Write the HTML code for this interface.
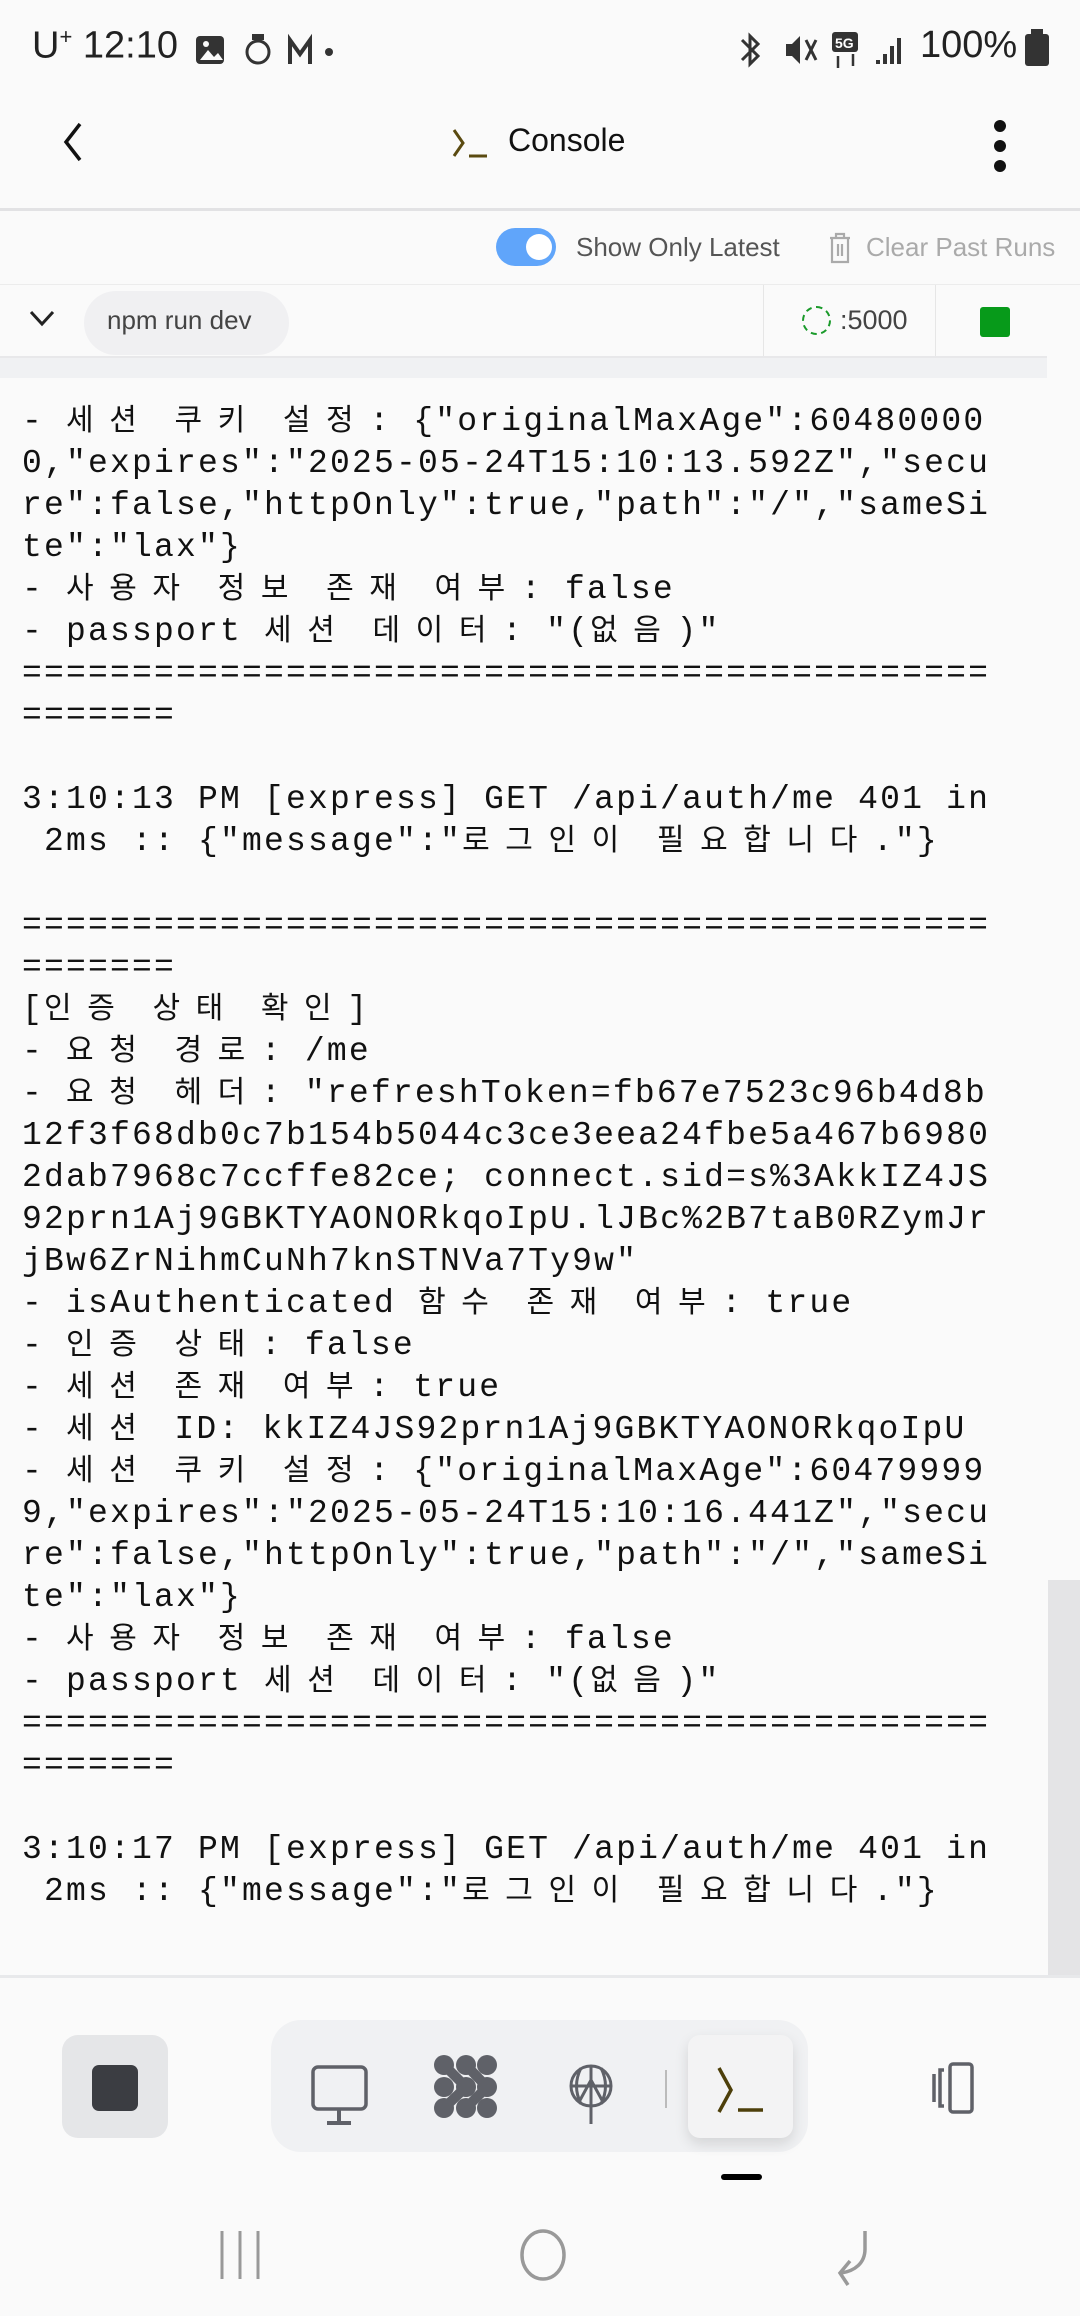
<!DOCTYPE html>
<html><head><meta charset="utf-8">
<style>
*{margin:0;padding:0;box-sizing:border-box}
body{width:1080px;height:2316px;background:#fafafa;position:relative;overflow:hidden;font-family:"Liberation Sans","Noto Sans CJK KR",sans-serif;color:#111}
.abs{position:absolute}
.log{position:absolute;left:22px;top:401px;font-family:"Liberation Mono","Noto Sans CJK KR",monospace;font-size:33px;letter-spacing:2.2px;line-height:42px;white-space:pre;color:#111}
.k{font-family:"Noto Sans CJK KR",sans-serif;font-size:30px;letter-spacing:15.6px;line-height:1}
</style></head><body>
<!-- status bar -->
<div class="abs" style="left:32px;top:24px;font-size:38px;color:#222">U<sup style="font-size:22px">+</sup> 12:10</div>
<svg class="abs" style="left:194px;top:32px" width="140" height="40" viewBox="0 0 140 40">
<rect x="2" y="4" width="28" height="28" rx="4" fill="#333"/><path d="M6 28l8-10 6 7 4-4 5 7z" fill="#fafafa"/><circle cx="12" cy="12" r="3" fill="#fafafa"/>
<circle cx="64" cy="20" r="11" fill="none" stroke="#333" stroke-width="3"/><rect x="58" y="2" width="12" height="6" fill="#333"/>
<path d="M96 32V8l10 14 10-14v24" fill="none" stroke="#333" stroke-width="4"/>
<circle cx="135" cy="20" r="4" fill="#333"/></svg>
<svg class="abs" style="left:738px;top:28px" width="290" height="44" viewBox="0 0 290 44">
<path d="M4 12l16 16-8 8V8l8 8-16 16" fill="none" stroke="#333" stroke-width="3"/>
<path d="M48 16h6l8-8v28l-8-8h-6z" fill="#333"/><path d="M68 12l10 20M78 12l-10 20" stroke="#333" stroke-width="3"/>
<rect x="94" y="4" width="26" height="20" rx="3" fill="#333"/><text x="97" y="20" font-size="14" fill="#fff" font-family="Liberation Sans" font-weight="bold">5G</text>
<path d="M100 28v12M115 26v12" stroke="#333" stroke-width="2.5"/>
<path d="M140 36v-4M147 36v-10M154 36v-18M161 36v-26" stroke="#333" stroke-width="4"/>
</svg>
<div class="abs" style="left:920px;top:24px;font-size:38px;color:#222">100%</div>
<div class="abs" style="left:1025px;top:34px;width:24px;height:32px;background:#333;border-radius:3px"></div>
<div class="abs" style="left:1031px;top:29px;width:12px;height:6px;background:#333"></div>

<!-- header -->
<svg class="abs" style="left:58px;top:120px" width="30" height="44"><path d="M22 4L8 22l14 18" fill="none" stroke="#111" stroke-width="3.5"/></svg>
<svg class="abs" style="left:452px;top:126px" width="38" height="34"><path d="M2 4l9 13-9 13" fill="none" stroke="#5a4a10" stroke-width="3"/><path d="M17 30h18" stroke="#5a4a10" stroke-width="3"/></svg>
<div class="abs" style="left:508px;top:122px;font-size:32px;color:#111">Console</div>
<div class="abs" style="left:994px;top:120px;width:12px;height:12px;border-radius:6px;background:#111"></div>
<div class="abs" style="left:994px;top:140px;width:12px;height:12px;border-radius:6px;background:#111"></div>
<div class="abs" style="left:994px;top:160px;width:12px;height:12px;border-radius:6px;background:#111"></div>
<div class="abs" style="left:0;top:208px;width:1080px;height:3px;background:#e2e2e4"></div>

<!-- toolbar -->
<div class="abs" style="left:496px;top:228px;width:60px;height:38px;border-radius:19px;background:#60a5fa"></div>
<div class="abs" style="left:526px;top:234px;width:26px;height:26px;border-radius:13px;background:#fff"></div>
<div class="abs" style="left:576px;top:232px;font-size:26px;color:#555">Show Only Latest</div>
<svg class="abs" style="left:826px;top:230px" width="28" height="36"><path d="M4 8h20M10 8V4h8v4M6 8v24h16V8M12 14v12M16 14v12" fill="none" stroke="#aaa" stroke-width="2.2"/></svg>
<div class="abs" style="left:866px;top:232px;font-size:26px;color:#aaa">Clear Past Runs</div>
<div class="abs" style="left:0;top:284px;width:1080px;height:1px;background:#ececec"></div>

<!-- process row -->
<svg class="abs" style="left:28px;top:308px" width="28" height="20"><path d="M3 4l11 12L25 4" fill="none" stroke="#222" stroke-width="3"/></svg>
<div class="abs" style="left:84px;top:291px;width:205px;height:64px;border-radius:32px;background:#f0f0f2"></div>
<div class="abs" style="left:107px;top:305px;font-size:26px;color:#444">npm run dev</div>
<div class="abs" style="left:763px;top:285px;width:1px;height:72px;background:#e6e6e6"></div>
<div class="abs" style="left:935px;top:285px;width:1px;height:72px;background:#e6e6e6"></div>
<div class="abs" style="left:802px;top:306px;width:29px;height:29px;border-radius:50%;border:2px dashed #1a9a2a"></div>
<div class="abs" style="left:840px;top:305px;font-size:27px;color:#444">:5000</div>
<div class="abs" style="left:980px;top:307px;width:30px;height:30px;border-radius:3px;background:#079a1a"></div>
<div class="abs" style="left:0;top:356px;width:1047px;height:22px;background:#f0f1f3;border-top:2px solid #e8e8ea"></div>
<div class="abs" style="left:1048px;top:1580px;width:32px;height:396px;background:#e4e4e6"></div>

<div class="log">- <span class="k">세션</span> <span class="k">쿠키</span> <span class="k">설정</span>: {"originalMaxAge":60480000
0,"expires":"2025-05-24T15:10:13.592Z","secu
re":false,"httpOnly":true,"path":"/","sameSi
te":"lax"}
- <span class="k">사용자</span> <span class="k">정보</span> <span class="k">존재</span> <span class="k">여부</span>: false
- passport <span class="k">세션</span> <span class="k">데이터</span>: "(<span class="k">없음</span>)"
============================================
=======

3:10:13 PM [express] GET /api/auth/me 401 in
 2ms :: {"message":"<span class="k">로그인이</span> <span class="k">필요합니다</span>."}

============================================
=======
[<span class="k">인증</span> <span class="k">상태</span> <span class="k">확인</span>]
- <span class="k">요청</span> <span class="k">경로</span>: /me
- <span class="k">요청</span> <span class="k">헤더</span>: "refreshToken=fb67e7523c96b4d8b
12f3f68db0c7b154b5044c3ce3eea24fbe5a467b6980
2dab7968c7ccffe82ce; connect.sid=s%3AkkIZ4JS
92prn1Aj9GBKTYAONORkqoIpU.lJBc%2B7taB0RZymJr
jBw6ZrNihmCuNh7knSTNVa7Ty9w"
- isAuthenticated <span class="k">함수</span> <span class="k">존재</span> <span class="k">여부</span>: true
- <span class="k">인증</span> <span class="k">상태</span>: false
- <span class="k">세션</span> <span class="k">존재</span> <span class="k">여부</span>: true
- <span class="k">세션</span> ID: kkIZ4JS92prn1Aj9GBKTYAONORkqoIpU
- <span class="k">세션</span> <span class="k">쿠키</span> <span class="k">설정</span>: {"originalMaxAge":60479999
9,"expires":"2025-05-24T15:10:16.441Z","secu
re":false,"httpOnly":true,"path":"/","sameSi
te":"lax"}
- <span class="k">사용자</span> <span class="k">정보</span> <span class="k">존재</span> <span class="k">여부</span>: false
- passport <span class="k">세션</span> <span class="k">데이터</span>: "(<span class="k">없음</span>)"
============================================
=======

3:10:17 PM [express] GET /api/auth/me 401 in
 2ms :: {"message":"<span class="k">로그인이</span> <span class="k">필요합니다</span>."}</div>

<div class="abs" style="left:0;top:1975px;width:1080px;height:3px;background:#e8e9eb"></div>

<!-- bottom bar -->
<div class="abs" style="left:62px;top:2035px;width:106px;height:103px;border-radius:16px;background:#e5e6e8"></div>
<div class="abs" style="left:92px;top:2065px;width:46px;height:46px;border-radius:7px;background:#3b3d42"></div>
<div class="abs" style="left:271px;top:2020px;width:537px;height:132px;border-radius:30px;background:#f0f1f3"></div>
<div class="abs" style="left:688px;top:2035px;width:105px;height:103px;border-radius:12px;background:#f3f3f4;box-shadow:0 6px 14px rgba(0,0,0,.12)"></div>
<svg class="abs" style="left:300px;top:2050px" width="480" height="80" viewBox="300 2050 480 80">
<rect x="313" y="2067" width="53" height="42" rx="5" fill="none" stroke="#5f6168" stroke-width="3.5"/>
<path d="M339 2109v14M327 2123h24" stroke="#5f6168" stroke-width="4"/>
<g fill="#5f6168"><circle cx="444" cy="2065" r="10"/><circle cx="466" cy="2065" r="10"/><circle cx="487" cy="2065" r="10"/>
<circle cx="444" cy="2087" r="10"/><circle cx="466" cy="2087" r="10"/><circle cx="487" cy="2087" r="10"/>
<circle cx="444" cy="2108" r="10"/><circle cx="466" cy="2108" r="10"/><circle cx="487" cy="2108" r="10"/></g>
<path d="M444 2065l22 22-22 21M466 2065l21 22-21 21" stroke="#5f6168" stroke-width="10" fill="none"/>
<circle cx="591" cy="2086" r="20" fill="none" stroke="#5f6168" stroke-width="3"/>
<path d="M571 2086h40M591 2066v58M581 2068c-6 12-6 24 0 36M601 2068c6 12 6 24 0 36M579 2102l12-22 12 22" fill="none" stroke="#5f6168" stroke-width="3"/>
<path d="M666 2070v38" stroke="#bbb" stroke-width="2"/>
<path d="M719 2068l12 22-12 22M738 2110h25" fill="none" stroke="#4d3f0a" stroke-width="3.5"/>
</svg>
<svg class="abs" style="left:930px;top:2060px" width="70" height="60"><path d="M4 14v28M14 10h-4v36h4" fill="none" stroke="#5f6168" stroke-width="3.5"/><rect x="20" y="4" width="22" height="48" rx="3" fill="none" stroke="#5f6168" stroke-width="3.5"/></svg>
<div class="abs" style="left:721px;top:2174px;width:41px;height:6px;border-radius:3px;background:#000"></div>

<!-- nav bar -->
<svg class="abs" style="left:210px;top:2225px" width="680" height="70">
<path d="M12 6v48M30 6v48M48 6v48" stroke="#999" stroke-width="3"/>
<ellipse cx="333" cy="30" rx="21" ry="24" fill="none" stroke="#999" stroke-width="3.5"/>
<path d="M655 6v18c0 14-10 22-24 24M640 36l-10 12 8 12" fill="none" stroke="#999" stroke-width="3.5"/>
</svg>
</body></html>
